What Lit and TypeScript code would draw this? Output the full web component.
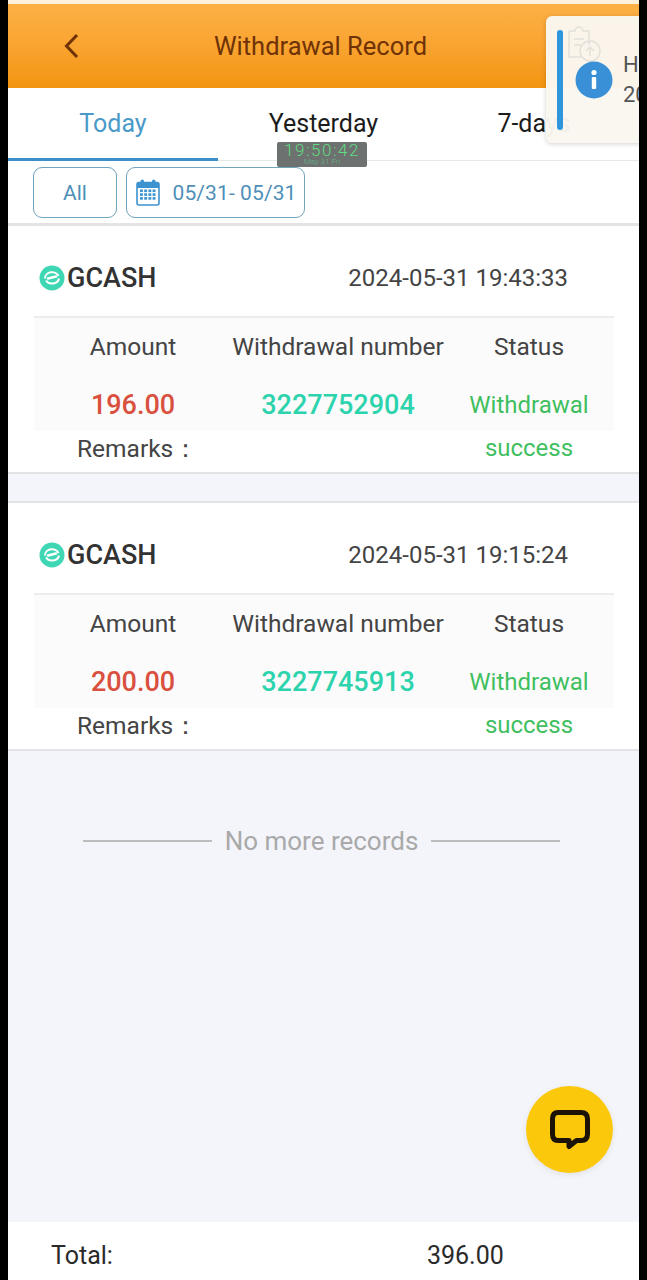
import { LitElement, html, css, svg } from "lit";
import { customElement } from "lit/decorators.js";

const records = [
  { time: "2024-05-31 19:43:33", amount: "196.00", no: "3227752904" },
  { time: "2024-05-31 19:15:24", amount: "200.00", no: "3227745913" },
];

const calendarDots = [0, 1, 2, 3].flatMap((c) =>
  [0, 1, 2].map((r) => svg`<rect x=${4 + c * 4.2} y=${10.5 + r * 3.8} width="2.9" height="2.6" fill="#3d93cf"></rect>`)
);

@customElement("app-root")
export class AppRoot extends LitElement {
  static styles = css`
    :host {
      display: block;
      background: #000;
      padding: 0 8px;
      height: 1280px;
      overflow: hidden;
      font-family: Roboto, "Liberation Sans", sans-serif;
    }
    .screen {
      position: relative;
      width: 631px;
      height: 1280px;
      background: #f4f5fb;
      display: flex;
      flex-direction: column;
      overflow: hidden;
    }
    .top-edge { height: 4px; background: #fdf1dc; flex: none; }
    .header {
      height: 84px;
      flex: none;
      background: linear-gradient(180deg, #fdb045 0%, #f9a431 50%, #f29410 100%);
      display: flex;
      align-items: center;
      justify-content: center;
      position: relative;
      color: #6f3207;
      font-size: 25.5px;
      box-sizing: border-box;
      padding-right: 6px;
    }
    .back { position: absolute; left: 55px; top: 28px; }
    .tabs {
      height: 73px;
      flex: none;
      background: #fff;
      display: grid;
      grid-template-columns: 210px 211px 210px;
      border-bottom: 1px solid #e8e8e8;
      box-sizing: border-box;
      font-size: 25px;
      color: #1c1c1c;
    }
    .tab {
      display: flex;
      justify-content: center;
      padding-top: 21px;
      box-sizing: border-box;
    }
    .tab.active { color: #4a9ac9; border-bottom: 3px solid #3d8fc9; height: 73px; }
    .filters {
      height: 65px;
      flex: none;
      background: #fff;
      display: flex;
      gap: 9px;
      padding: 6px 0 0 25px;
      box-sizing: border-box;
      border-bottom: 3px solid #e4e4e6;
    }
    .chip {
      height: 51px;
      box-sizing: border-box;
      border: 1.5px solid #6fa5bd;
      border-radius: 9px;
      display: flex;
      align-items: center;
      justify-content: center;
      color: #4f8fb8;
      font-size: 21px;
    }
    .chip.all { width: 84px; }
    .chip.date { width: 179px; gap: 13px; padding-left: 1px; letter-spacing: 0.1px; }
    .card {
      background: #fff;
      flex: none;
      box-sizing: border-box;
      border-bottom: 2px solid #e3e3e6;
      padding: 0 25px 0 26px;
    }
    .card + .card { border-top: 2px solid #e3e3e6; margin-top: 27px; }
    .card-head {
      height: 92px;
      display: flex;
      align-items: center;
      justify-content: space-between;
      border-bottom: 2px solid #ececec;
      box-sizing: border-box;
      padding: 20px 46px 6px 5px;
    }
    .brand {
      display: flex;
      align-items: center;
      gap: 2px;
      font-size: 27px;
      font-weight: 500;
      color: #333;
    }
    .time { font-size: 24px; color: #444; }
    .table { background: #fbfbfb; height: 113px; }
    .row {
      display: grid;
      grid-template-columns: 198px 212px 170px;
      text-align: center;
    }
    .labels { height: 57px; align-items: center; font-size: 24.5px; color: #444; }
    .values { height: 56px; padding-top: 0; font-size: 27px; line-height: 60px; font-weight: 500; }
    .amount { color: #d9503f; }
    .number { color: #2dd3ac; }
    .status { color: #3fbf5f; font-size: 24px; font-weight: 400; line-height: 43px; padding-top: 9px; }
    .remarks {
      height: 41px;
      padding-left: 43px;
      font-size: 24.5px;
      line-height: 36px;
      color: #444;
    }
    .no-more {
      display: flex;
      align-items: center;
      justify-content: center;
      gap: 13px;
      margin-top: 73px;
      height: 34px;
      font-size: 26px;
      color: #a9a9a9;
      padding-right: 4px;
    }
    .no-more i { display: block; width: 129px; height: 2px; background: #bdbdbd; }
    .spacer { flex: 1; }
    .footer {
      height: 58px;
      flex: none;
      background: #fff;
      display: flex;
      align-items: center;
      font-size: 25px;
      color: #2a2a2a;
      padding: 9px 0 0 43px;
      box-sizing: border-box;
    }
    .total-value { margin-left: 314px; }
    .chat {
      position: absolute;
      left: 518px;
      top: 1086px;
      width: 87px;
      height: 87px;
      border-radius: 50%;
      background: #fcc80c;
      box-shadow: 0 2px 6px rgba(0, 0, 0, 0.08);
      display: flex;
      align-items: center;
      justify-content: center;
    }
    .toast {
      position: absolute;
      left: 538px;
      top: 16px;
      width: 100px;
      height: 127px;
      background: rgba(250, 247, 241, 0.97);
      border-radius: 6px 0 0 6px;
      box-shadow: 0 1px 5px rgba(0, 0, 0, 0.18);
      font-size: 22px;
      color: #555;
      overflow: hidden;
    }
    .toast .bar {
      position: absolute;
      left: 11px;
      top: 14px;
      width: 6px;
      height: 100px;
      border-radius: 3px;
      background: #2e96dc;
    }
    .toast .ghost { position: absolute; left: 19px; top: 7px; }
    .toast .info { position: absolute; left: 29px; top: 45px; }
    .toast .l1 { position: absolute; left: 77px; top: 36px; }
    .toast .l2 { position: absolute; left: 77px; top: 66px; }
    .clock {
      position: absolute;
      left: 269px;
      top: 142px;
      width: 90px;
      height: 25px;
      background: #6d716f;
      border-radius: 2px;
      color: #5fdc82;
      text-align: center;
      line-height: 1;
      font-weight: 300;
    }
    .clock .t { font-size: 17px; letter-spacing: 1.5px; padding-top: 0; }
    .clock .d { font-size: 8px; color: #63b78a; margin-top: -1px; }
  `;

  private gcashIcon() {
    return html`<svg width="26" height="26" viewBox="0 0 26 26">
      <circle cx="13" cy="13" r="12.5" fill="#3fd6b4"></circle>
      <path d="M6 13.5 a7 6 0 0 1 13.5 -2.5 M20 13.5 a7 6 0 0 1 -13 2" fill="none" stroke="#fff" stroke-width="2"></path>
      <path d="M9 13.5 L17 11.5" stroke="#fff" stroke-width="2.4" stroke-linecap="round"></path>
    </svg>`;
  }

  private card(r: { time: string; amount: string; no: string }) {
    return html`<section class="card">
      <div class="card-head">
        <div class="brand">${this.gcashIcon()}<span>GCASH</span></div>
        <div class="time">${r.time}</div>
      </div>
      <div class="table">
        <div class="row labels"><div>Amount</div><div>Withdrawal number</div><div>Status</div></div>
        <div class="row values">
          <div class="amount">${r.amount}</div>
          <div class="number">${r.no}</div>
          <div class="status">Withdrawal success</div>
        </div>
      </div>
      <div class="remarks">Remarks：</div>
    </section>`;
  }

  render() {
    return html`<div class="screen">
      <div class="top-edge"></div>
      <header class="header">
        <svg class="back" width="18" height="28" viewBox="0 0 18 28">
          <path d="M14 3 L3.5 14 L14 25" fill="none" stroke="#6f3207" stroke-width="3"></path>
        </svg>
        <span>Withdrawal Record</span>
      </header>
      <nav class="tabs">
        <div class="tab active">Today</div>
        <div class="tab">Yesterday</div>
        <div class="tab">7-days</div>
      </nav>
      <div class="filters">
        <div class="chip all">All</div>
        <div class="chip date">
          <svg width="24" height="27" viewBox="0 0 24 27">
            <rect x="1" y="3.5" width="22" height="22.5" rx="2" fill="#fff" stroke="#3d93cf" stroke-width="1.6"></rect>
            <rect x="1" y="3.5" width="22" height="5.5" fill="#3d93cf"></rect>
            <rect x="4.6" y="0.5" width="3.4" height="6" rx="1.7" fill="#3d93cf"></rect>
            <rect x="16" y="0.5" width="3.4" height="6" rx="1.7" fill="#3d93cf"></rect>
            ${calendarDots}
          </svg>
          <span>05/31- 05/31</span>
        </div>
      </div>
      ${records.map((r) => this.card(r))}
      <div class="no-more"><i></i><span>No more records</span><i></i></div>
      <div class="spacer"></div>
      <footer class="footer"><span>Total:</span><span class="total-value">396.00</span></footer>

      <div class="chat">
        <svg width="44" height="44" viewBox="0 0 44 44">
          <path d="M10 4.5 H33 Q39.5 4.5 39.5 11 V26 Q39.5 32.5 33 32.5 H28.5 L21 38.5 V32.5 H10 Q4.5 32.5 4.5 26 V11 Q4.5 4.5 10 4.5 Z" fill="none" stroke="#1d1206" stroke-width="5" stroke-linejoin="round"></path>
        </svg>
      </div>

      <aside class="toast">
        <svg class="ghost" width="42" height="42" viewBox="0 0 42 42" fill="none" stroke="#e2dfda" stroke-width="1.4">
          <path d="M4 8 H10 A4 4 0 0 1 18 8 H24 V22 M4 8 V34 H16"></path>
          <path d="M9 16 H19 M9 22 H16"></path>
          <circle cx="25" cy="28" r="10"></circle>
          <path d="M25 33 V24 M21 28 L25 24 L29 28"></path>
        </svg>
        <div class="bar"></div>
        <svg class="info" width="38" height="38" viewBox="0 0 38 38">
          <circle cx="19" cy="19" r="18.5" fill="#3a90d6"></circle>
          <circle cx="19" cy="11.5" r="2.6" fill="#fff"></circle>
          <rect x="16.8" y="16" width="4.4" height="12" rx="1" fill="#fff"></rect>
        </svg>
        <div class="l1">Hi</div>
        <div class="l2">2024</div>
      </aside>

      <div class="clock">
        <div class="t">19:50:42</div>
        <div class="d">May 31 Fri</div>
      </div>
    </div>`;
  }
}
